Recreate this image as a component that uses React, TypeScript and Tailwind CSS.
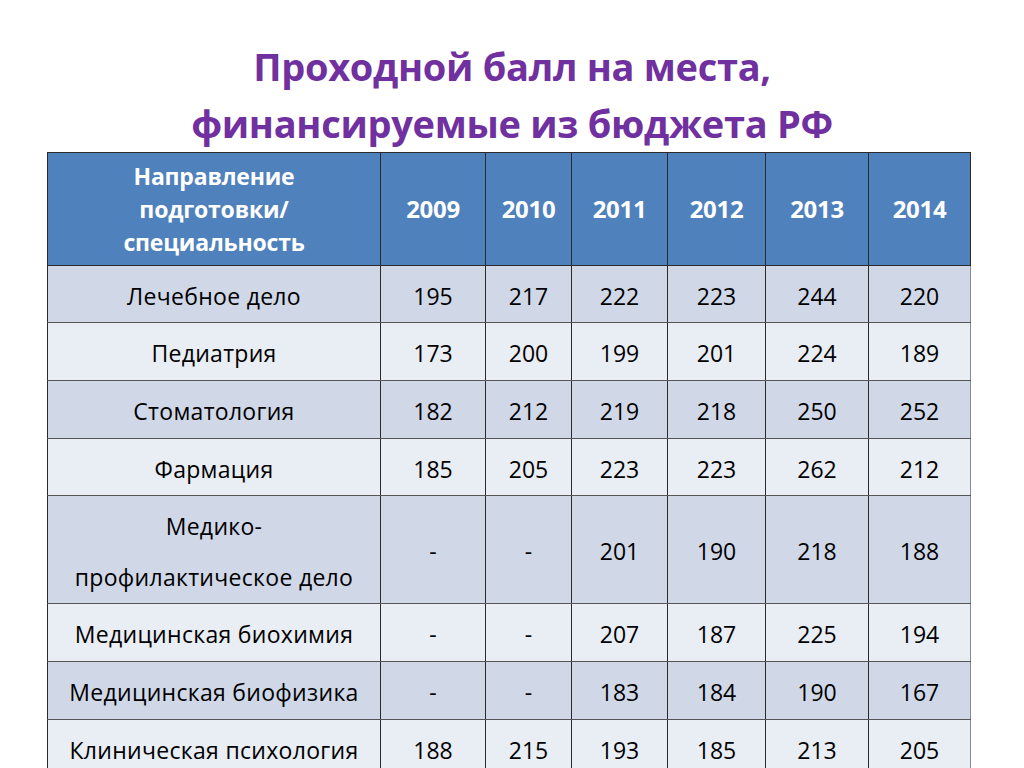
const years = ["2009", "2010", "2011", "2012", "2013", "2014"]

const rows: { name: React.ReactNode; values: string[]; h: string }[] = [
  { name: "Лечебное дело", values: ["195", "217", "222", "223", "244", "220"], h: "h-[57px]" },
  { name: "Педиатрия", values: ["173", "200", "199", "201", "224", "189"], h: "h-[58px]" },
  { name: "Стоматология", values: ["182", "212", "219", "218", "250", "252"], h: "h-[58px]" },
  { name: "Фармация", values: ["185", "205", "223", "223", "262", "212"], h: "h-[57px]" },
  {
    name: (
      <span className="block leading-[51px]">
        Медико-
        <br />
        профилактическое дело
      </span>
    ),
    values: ["-", "-", "201", "190", "218", "188"],
    h: "h-[108px]",
  },
  { name: "Медицинская биохимия", values: ["-", "-", "207", "187", "225", "194"], h: "h-[58px]" },
  { name: "Медицинская биофизика", values: ["-", "-", "183", "184", "190", "167"], h: "h-[58px]" },
  { name: "Клиническая психология", values: ["188", "215", "193", "185", "213", "205"], h: "h-[58px]" },
]

const colWidths = ["w-[333px]", "w-[105px]", "w-[86px]", "w-[96px]", "w-[98px]", "w-[103px]", "w-[102px]"]

export default function App() {
  return (
    <div className="w-[1024px] h-[768px] overflow-hidden bg-white font-['Open_Sans',sans-serif]">
      <h1 className="pt-[38px] text-center text-[38px] font-bold leading-[57px] text-[#7030a0] tracking-[-0.3px]">
        Проходной балл на места,
        <br />
        финансируемые из бюджета РФ
      </h1>

      <table className="ml-[47px] table-fixed border-collapse w-[923px]">
        <colgroup>
          {colWidths.map((w, i) => (
            <col key={i} className={w} />
          ))}
        </colgroup>
        <thead>
          <tr className="h-[113px] bg-[#4f81bd] text-white">
            <th className="border border-[#2b2b2b] text-[23px] font-bold leading-[33px] px-1 tracking-[-0.2px]">
              Направление
              <br />
              подготовки/
              <br />
              специальность
            </th>
            {years.map((y) => (
              <th key={y} className="border border-[#2b2b2b] text-[24px] font-bold tracking-[-0.3px]">
                {y}
              </th>
            ))}
          </tr>
        </thead>
        <tbody>
          {rows.map((r, i) => (
            <tr key={i} className={`${r.h} ${i % 2 === 0 ? "bg-[#d0d8e8]" : "bg-[#e9edf4]"}`}>
              <td className="border-y border-y-[#555] border-x border-x-[#2b2b2b] pt-[4px] text-center text-[23px] text-black px-1 tracking-[0.3px] whitespace-nowrap">
                {r.name}
              </td>
              {r.values.map((v, j) => (
                <td
                  key={j}
                  className={`border-y border-y-[#555] border-l border-l-[#2b2b2b] pt-[4px] text-center text-[23px] text-black ${
                    j === 5 ? "border-r border-r-[#8a8a8a]" : "border-r border-r-[#2b2b2b]"
                  }`}
                >
                  {v}
                </td>
              ))}
            </tr>
          ))}
        </tbody>
      </table>
    </div>
  )
}
